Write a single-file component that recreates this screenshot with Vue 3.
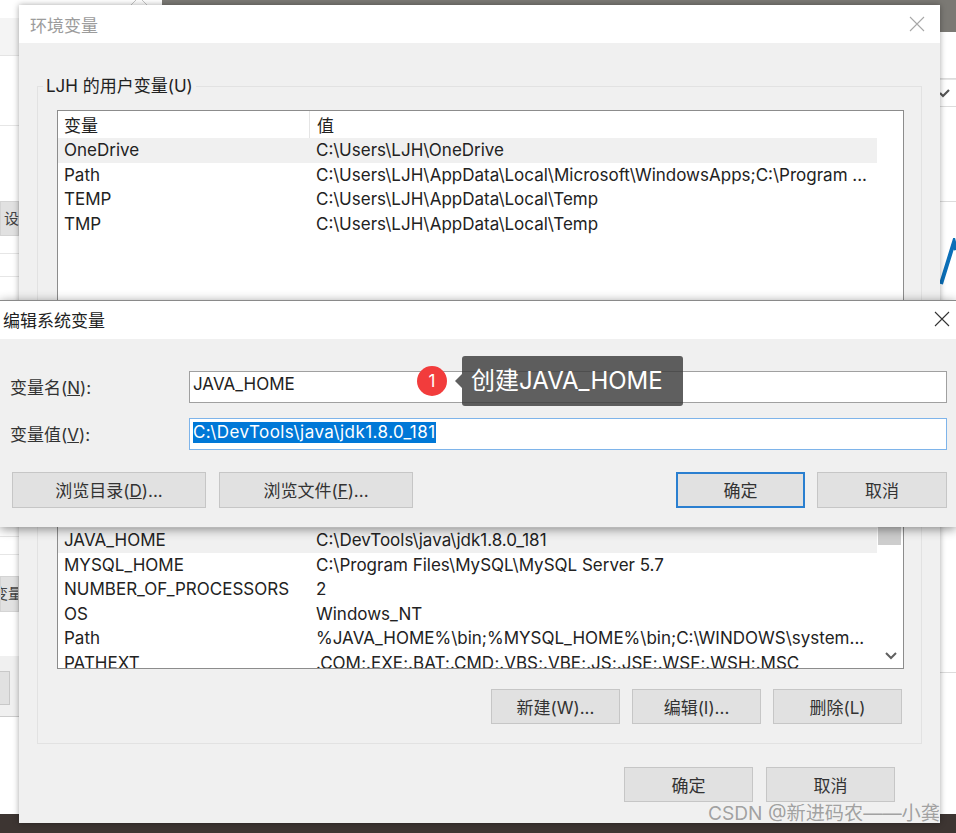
<template>
  <div class="desktop">
    <!-- things peeking out behind the windows -->
    <div class="back-top"></div>
    <div class="back-bottom"></div>
    <svg class="back-notch" width="24" height="8" viewBox="0 0 24 8"><path d="M4 8 L12 0 L20 8" fill="#fff" stroke="#c4c4c4" /></svg>
    <div class="back-left">
      <div class="left-head"></div>
      <div class="left-line" style="height: 70px"></div>
      <div class="left-plain" style="height: 75px"></div>
      <div class="left-btn">设</div>
      <div class="left-line" style="height: 18px"></div>
      <div class="left-line" style="height: 23px"></div>
      <div class="left-line" style="height: 260px"></div>
      <div class="left-line" style="height: 18px"></div>
      <div class="left-plain" style="height: 21px"></div>
      <div class="left-btn left-btn-2"><span>变量</span></div>
      <div class="left-plain" style="height: 44px"></div>
      <div class="left-foot"><div class="left-foot-btn"></div></div>
    </div>
    <div class="back-right">
      <div class="right-row" style="height: 46px"></div>
      <div class="right-row right-check">
        <svg width="10" height="10" viewBox="0 0 10 10"><path d="M0 5 L3 8 L9 2" fill="none" stroke="#555" stroke-width="2.2" /></svg>
      </div>
      <div class="right-row" style="height: 94px"></div>
      <svg class="right-logo" width="16" height="50" viewBox="0 0 16 50">
        <path d="M1 46 L14 4 L16 12" fill="none" stroke="#0b6fb8" stroke-width="4" />
      </svg>
      <div class="right-row" style="height: 384px"></div>
    </div>

    <!-- 环境变量 window -->
    <section class="env-window">
      <header class="env-title">
        <span>环境变量</span>
        <svg width="16" height="16" viewBox="0 0 16 16"><path d="M1 1 L15 15 M15 1 L1 15" stroke="#a8a8a8" stroke-width="1.1" /></svg>
      </header>
      <div class="env-body">
        <div class="group">
          <div class="legend">LJH 的用户变量(U)</div>
          <div class="list user-list">
            <div class="list-head">
              <div class="col-name">变量</div>
              <div class="col-value col-sep">值</div>
            </div>
            <div v-for="(row, i) in userVars" :key="row.name" class="row" :class="{ hit: i === 0 }">
              <div class="col-name">{{ row.name }}</div>
              <div class="col-value">{{ row.value }}</div>
            </div>
          </div>
          <div class="list sys-list">
            <div class="sys-rows">
              <div v-for="(row, i) in sysVars" :key="row.name" class="row" :class="{ hit: i === 0 }">
                <div class="col-name">{{ row.name }}</div>
                <div class="col-value">{{ row.value }}</div>
              </div>
            </div>
            <div class="scrollbar">
              <div class="thumb"></div>
              <svg width="12" height="8" viewBox="0 0 12 8"><path d="M1 1 L6 6 L11 1" fill="none" stroke="#606060" stroke-width="2" /></svg>
            </div>
          </div>
          <div class="group-actions">
            <button class="btn">新建(W)...</button>
            <button class="btn">编辑(I)...</button>
            <button class="btn">删除(L)</button>
          </div>
        </div>
        <div class="env-actions">
          <button class="btn">确定</button>
          <button class="btn">取消</button>
        </div>
      </div>
    </section>

    <!-- 编辑系统变量 dialog -->
    <section class="edit-dialog">
      <header class="edit-title">
        <span>编辑系统变量</span>
        <svg width="16" height="16" viewBox="0 0 16 16"><path d="M1 1 L15 15 M15 1 L1 15" stroke="#333" stroke-width="1.1" /></svg>
      </header>
      <div class="edit-body">
        <div class="field">
          <label>变量名(<u>N</u>):</label>
          <div class="input">JAVA_HOME</div>
        </div>
        <div class="field field-2">
          <label>变量值(<u>V</u>):</label>
          <div class="input focused"><span class="selected">C:\DevTools\java\jdk1.8.0_181</span></div>
        </div>
        <div class="edit-actions">
          <button class="btn wide">浏览目录(<u>D</u>)...</button>
          <button class="btn wide">浏览文件(<u>F</u>)...</button>
          <div class="spacer"></div>
          <button class="btn default">确定</button>
          <button class="btn cancel">取消</button>
        </div>
      </div>
    </section>

    <!-- annotation on top of the dialog -->
    <div class="note">
      <div class="note-num">1</div>
      <div class="note-arrow"></div>
      <div class="note-text">创建JAVA_HOME</div>
    </div>

    <div class="watermark">CSDN @新进码农——小龚</div>
  </div>
</template>

<script setup>
const userVars = [
  { name: 'OneDrive', value: 'C:\\Users\\LJH\\OneDrive' },
  { name: 'Path', value: 'C:\\Users\\LJH\\AppData\\Local\\Microsoft\\WindowsApps;C:\\Program ...' },
  { name: 'TEMP', value: 'C:\\Users\\LJH\\AppData\\Local\\Temp' },
  { name: 'TMP', value: 'C:\\Users\\LJH\\AppData\\Local\\Temp' }
]

const sysVars = [
  { name: 'JAVA_HOME', value: 'C:\\DevTools\\java\\jdk1.8.0_181' },
  { name: 'MYSQL_HOME', value: 'C:\\Program Files\\MySQL\\MySQL Server 5.7' },
  { name: 'NUMBER_OF_PROCESSORS', value: '2' },
  { name: 'OS', value: 'Windows_NT' },
  { name: 'Path', value: '%JAVA_HOME%\\bin;%MYSQL_HOME%\\bin;C:\\WINDOWS\\system...' },
  { name: 'PATHEXT', value: '.COM;.EXE;.BAT;.CMD;.VBS;.VBE;.JS;.JSE;.WSF;.WSH;.MSC' }
]
</script>

<style>
html, body {
  margin: 0;
  background: #fff;
}
</style>

<style scoped>
.desktop {
  position: relative;
  width: 956px;
  height: 833px;
  overflow: hidden;
  background: #fff;
  color: #222;
  font-family: Inter, "Noto Sans CJK SC", sans-serif;
  font-size: 17px;
}

.back-top {
  position: absolute;
  left: 162px;
  top: 0;
  right: 0;
  height: 32px;
  background: #7b7974;
}
.back-bottom {
  position: absolute;
  left: 0;
  right: 0;
  bottom: 0;
  height: 19px;
  background: #3d3532;
}
.back-notch {
  position: absolute;
  left: 127px;
  top: -3px;
}

.back-left {
  position: absolute;
  left: 0;
  top: 18px;
  width: 19px;
  display: flex;
  flex-direction: column;
}
.left-head {
  height: 38px;
  box-sizing: border-box;
  background: #f4f4f4;
  border-bottom: 1px solid #e4e4e4;
}
.left-line {
  box-sizing: border-box;
  border-bottom: 1px solid #e6e6e6;
}
.left-plain {
  flex: none;
}
.left-btn {
  height: 35px;
  background: #e1e1e1;
  border: 1px solid #d4d4d4;
  box-sizing: border-box;
  font-size: 15px;
  line-height: 33px;
  padding-left: 3px;
  color: #444;
}
.left-btn-2 {
  height: 36px;
  overflow: hidden;
  padding-left: 0;
  white-space: nowrap;
}
.left-btn-2 span {
  margin-left: -8px;
}
.left-foot {
  height: 61px;
  background: #f0f0f0;
  padding-top: 15px;
  box-sizing: border-box;
  border-bottom: 1px solid #ccc;
}
.left-foot-btn {
  width: 10px;
  height: 34px;
  background: #e1e1e1;
  border: 1px solid #c8c8c8;
  border-left: 0;
  box-sizing: border-box;
}

.back-right {
  position: absolute;
  left: 940px;
  top: 32px;
  width: 16px;
  display: flex;
  flex-direction: column;
}
.right-row {
  border-bottom: 1px solid #dcdcdc;
}
.right-check {
  height: 28px;
  border-top: 1px solid #e4e4e4;
  box-sizing: border-box;
  display: flex;
  align-items: center;
}
.right-logo {
  margin-top: 36px;
}

.env-window {
  position: absolute;
  left: 19px;
  top: 5px;
  width: 921px;
  height: 818px;
  box-sizing: border-box;
  background: #f0f0f0;
  box-shadow: 0 0 6px rgba(0, 0, 0, 0.35);
}
.env-title {
  height: 38px;
  background: #fff;
  color: #9c9c9c;
  padding: 0 15px 0 11px;
  display: flex;
  align-items: center;
  justify-content: space-between;
}
.env-body {
  padding: 43px 18px 0;
}
.group {
  position: relative;
  height: 658px;
  box-sizing: border-box;
  border: 1px solid #e2e2e2;
  padding: 23px 17px 0 19px;
}
.legend {
  position: absolute;
  left: 5px;
  top: -13px;
  padding: 0 3px;
  line-height: 24px;
  background: #f0f0f0;
}
.list {
  background: #fff;
  border: 1px solid #8c8c8c;
  overflow: hidden;
}
.user-list {
  height: 220px;
}
.list-head {
  display: flex;
  height: 27px;
  padding-left: 5px;
  line-height: 30px;
}
.col-name {
  width: 246px;
  padding-left: 1px;
  box-sizing: border-box;
  flex: none;
  white-space: nowrap;
}
.col-value {
  flex: 1;
  padding-left: 7px;
  white-space: nowrap;
}
.col-sep {
  border-left: 1px solid #e5e5e5;
}
.row {
  display: flex;
  height: 24.6px;
  line-height: 25.6px;
  padding-left: 5px;
  margin-right: 26px;
}
.row.hit {
  background: #f0f0f0;
}
.sys-list {
  position: relative;
  margin-top: 162px;
  height: 175px;
  box-sizing: border-box;
  padding-top: 33px;
}
.sys-rows {
  height: 140px;
  overflow: hidden;
}
.scrollbar {
  position: absolute;
  right: 0;
  top: 0;
  bottom: 0;
  width: 25px;
  background: #fff;
  display: flex;
  flex-direction: column;
  align-items: flex-start;
}
.scrollbar .thumb {
  width: 23px;
  height: 50px;
  background: #cdcdcd;
}
.scrollbar svg {
  align-self: center;
  margin-top: auto;
  margin-bottom: 8px;
}
.group-actions {
  display: flex;
  justify-content: flex-end;
  gap: 12px;
  margin: 20px 2px 0 0;
}
.env-actions {
  display: flex;
  justify-content: flex-end;
  gap: 13px;
  margin: 23px 27px 0 0;
}

.btn {
  width: 129px;
  height: 35px;
  padding: 0;
  box-sizing: border-box;
  background: #e1e1e1;
  border: 1px solid #c6c6c6;
  color: #333;
  font: inherit;
  cursor: pointer;
}

.edit-dialog {
  position: absolute;
  left: 0;
  top: 300px;
  width: 956px;
  height: 227px;
  background: #f0f0f0;
  border-top: 1px solid #8a8a8a;
  box-sizing: border-box;
  box-shadow: 0 2px 10px rgba(0, 0, 0, 0.45);
}
.edit-title {
  height: 38px;
  background: #fff;
  padding: 0 6px 2px 3px;
  box-sizing: border-box;
  display: flex;
  align-items: center;
  justify-content: space-between;
}
.edit-body {
  padding: 32px 9px 0 10px;
}
.field {
  display: flex;
  align-items: center;
}
.field-2 {
  margin-top: 15px;
}
.field label {
  width: 179px;
  flex: none;
  color: #333;
  padding-bottom: 2px;
}
.input {
  flex: 1;
  height: 32px;
  box-sizing: border-box;
  background: #fff;
  border: 1px solid #a0a0a0;
  padding-left: 3px;
  line-height: 24px;
}
.input.focused {
  border-color: #7eb4ea;
  padding-top: 1px;
}
.selected {
  display: inline-block;
  background: #0078d7;
  color: #fff;
  line-height: 21px;
  letter-spacing: 0.45px;
}
.edit-actions {
  display: flex;
  gap: 13px;
  margin-top: 22px;
  padding-left: 2px;
}
.edit-actions .btn {
  padding-bottom: 2px;
}
.spacer {
  flex: 1;
}
.btn.wide {
  width: 194px;
  height: 36px;
}
.btn.default {
  height: 36px;
  border: 2px solid #2a7fd0;
  margin-right: -1px;
}
.btn.cancel {
  width: 130px;
  height: 36px;
}

.note {
  position: absolute;
  left: 417px;
  top: 356px;
  display: flex;
  align-items: center;
}
.note-num {
  width: 30px;
  height: 30px;
  border-radius: 50%;
  background: #f23c3c;
  color: #fff;
  font-size: 17px;
  line-height: 30px;
  text-align: center;
}
.note-arrow {
  width: 0;
  height: 0;
  margin-left: 8px;
  border: 7px solid transparent;
  border-left: 0;
  border-right-color: rgba(60, 60, 60, 0.82);
}
.note-text {
  width: 221px;
  height: 50px;
  box-sizing: border-box;
  padding-left: 9px;
  border-radius: 3px;
  background: rgba(60, 60, 60, 0.82);
  color: #fff;
  font-size: 24px;
  line-height: 50px;
  white-space: nowrap;
}

.watermark {
  position: absolute;
  right: 16px;
  top: 799px;
  font-size: 19.2px;
  line-height: 28px;
  color: rgba(110, 110, 110, 0.62);
  white-space: nowrap;
}
</style>
